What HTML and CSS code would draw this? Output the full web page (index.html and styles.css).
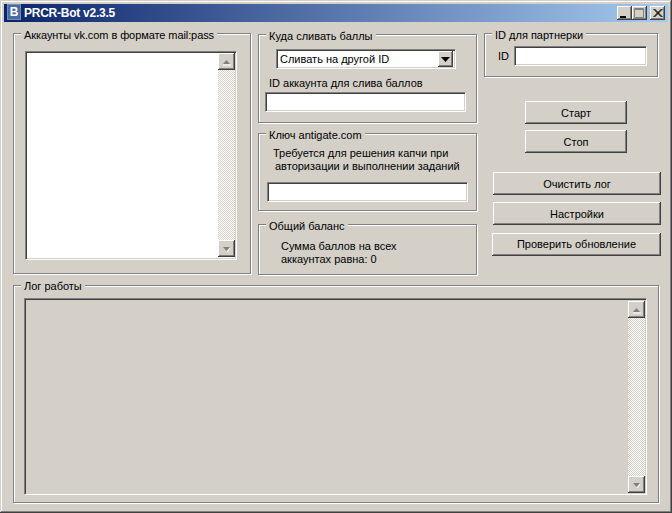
FILE: index.html
```html
<!DOCTYPE html>
<html lang="ru">
<head>
<meta charset="utf-8">
<title>PRCR-Bot v2.3.5</title>
<link rel="stylesheet" href="styles.css">
</head>
<body>
<div class="window">
  <div class="titlebar">
    <span class="app-icon">B</span>
    <span class="title">PRCR-Bot v2.3.5</span>
    <span class="caption-btn cap-min"><svg width="15" height="14" viewBox="0 0 15 14"><rect x="3" y="10" width="6" height="2" fill="#000"/></svg></span>
    <span class="caption-btn cap-max"><svg width="15" height="14" viewBox="0 0 15 14"><path d="M2.500 2.500h9v9h-9zM2.500 3.500h9" fill="none" stroke="#808080"/></svg></span>
    <span class="caption-btn cap-close"><svg width="15" height="14" viewBox="0 0 15 14"><path d="M3.500 3l8 8M4.500 3l8 8M11.500 3l-8 8M12.500 3l-8 8" fill="none" stroke="#000"/></svg></span>
  </div>

  <div class="top">
    <section class="group g-accounts">
      <span class="legend legend-tight">Аккаунты vk.com в формате mail:pass</span>
      <div class="sunken list">
        <div class="scrollbar">
          <span class="sb-btn"><svg width="13" height="13" viewBox="0 0 13 13"><path d="M3 9h7L6.500 5z" fill="#808080"/><path d="M3 10h8" stroke="#fff"/></svg></span>
          <span class="sb-track"></span>
          <span class="sb-btn"><svg width="13" height="13" viewBox="0 0 13 13"><path d="M3 5h7L6.500 9z" fill="#808080"/><path d="M7 10l3-4" stroke="#fff"/></svg></span>
        </div>
      </div>
    </section>

    <div class="col-mid">
      <section class="group g-target">
        <span class="legend">Куда сливать баллы</span>
        <div class="sunken combo">
          <span class="combo-text">Сливать на другой ID</span>
          <span class="combo-btn"><svg width="9" height="5" viewBox="0 0 9 5"><path d="M0 0h9L4.500 5z" fill="#000"/></svg></span>
        </div>
        <p class="label l-target">ID аккаунта для слива баллов</p>
        <div class="sunken field f-target"></div>
      </section>

      <section class="group g-key">
        <span class="legend">Ключ antigate.com</span>
        <p class="label l-key1">Требуется для решения капчи при</p>
        <p class="label l-key2">авторизации и выполнении заданий</p>
        <div class="sunken field f-key"></div>
      </section>

      <section class="group g-balance">
        <span class="legend">Общий баланс</span>
        <p class="label l-sum1">Сумма баллов на всех</p>
        <p class="label l-sum2">аккаунтах равна: 0</p>
      </section>
    </div>

    <div class="col-right">
      <section class="group g-partner">
        <span class="legend">ID для партнерки</span>
        <div class="partner-row">
          <span class="label">ID</span>
          <div class="sunken field f-partner"></div>
        </div>
      </section>
      <div class="btn b-start">Старт</div>
      <div class="btn b-stop">Стоп</div>
      <div class="btn b-clear">Очистить лог</div>
      <div class="btn b-settings">Настройки</div>
      <div class="btn b-update">Проверить обновление</div>
    </div>
  </div>

  <section class="group g-log">
    <span class="legend legend-log">Лог работы</span>
    <div class="sunken log">
      <div class="scrollbar">
        <span class="sb-btn"><svg width="13" height="13" viewBox="0 0 13 13"><path d="M3 9h7L6.500 5z" fill="#808080"/><path d="M3 10h8" stroke="#fff"/></svg></span>
        <span class="sb-track"></span>
        <span class="sb-btn"><svg width="13" height="13" viewBox="0 0 13 13"><path d="M3 5h7L6.500 9z" fill="#808080"/><path d="M7 10l3-4" stroke="#fff"/></svg></span>
      </div>
    </div>
  </section>
</div>
</body>
</html>
```
FILE: styles.css
```css
* { box-sizing: border-box; }
html, body { margin: 0; padding: 0; }
body { background: #d4d0c8; font: 11px/13px "Liberation Sans", Arial, sans-serif; color: #000; }

.window {
  width: 672px;
  height: 513px;
  padding: 4px;
  background: #d4d0c8;
  overflow: hidden;
  box-shadow: inset -1px -1px #404040, inset 1px 1px #d4d0c8, inset -2px -2px #808080, inset 2px 2px #fff;
}

.titlebar {
  height: 18px;
  display: flex;
  align-items: center;
  padding-left: 3px;
  padding-right: 3px;
  background: linear-gradient(90deg, #0a246a, #a6caf0);
}
.app-icon {
  width: 14px;
  height: 16px;
  margin-top: -2px;
  background: #4a6c9e;
  box-shadow: inset 0 0 0 1px #6f8db8;
  color: #fff;
  font-weight: bold;
  font-size: 12px;
  line-height: 16px;
  text-align: center;
}
.title { margin-left: 3px; flex: 1; color: #fff; font-weight: bold; font-size: 12px; letter-spacing: -0.25px; }
.caption-btn {
  width: 15px;
  height: 14px;
  display: block;
  background: #d4d0c8;
  box-shadow: inset -1px -1px #404040, inset 1px 1px #fff, inset -2px -2px #808080;
}
.caption-btn svg { display: block; }
.cap-max { margin: 0 2px 0 0; }
.cap-close { margin-left: 1px; }

.top { display: flex; margin: 11px 0 0 9px; }
.col-mid { width: 219px; margin-left: 7px; display: flex; flex-direction: column; }
.col-right { width: 177px; margin-left: 7px; display: flex; flex-direction: column; }

.group {
  position: relative;
  border: 1px solid #808080;
  box-shadow: inset 1px 1px #fff, 1px 1px #fff;
}
.legend {
  position: absolute;
  left: 7px;
  top: -5px;
  padding: 0 3px;
  background: #d4d0c8;
  white-space: nowrap;
}
.legend-tight { letter-spacing: -0.08px; }
.legend-log { top: -6px; }
.label { margin: 0; white-space: nowrap; }

.sunken {
  border: 1px solid;
  border-color: #808080 #fff #fff #808080;
  box-shadow: inset 1px 1px #404040, inset -1px -1px #d4d0c8;
  background: #fff;
}
.field { height: 20px; }

.g-accounts { width: 238px; height: 241px; padding: 17px 0 0 11px; }
.list { width: 212px; height: 209px; padding: 1px 1px 2px 2px; display: flex; justify-content: flex-end; }
.scrollbar { width: 17px; display: flex; flex-direction: column; }
.sb-btn {
  height: 17px;
  flex: none;
  padding: 2px;
  background: #d4d0c8;
  box-shadow: inset -1px -1px #404040, inset 1px 1px #fff, inset -2px -2px #808080;
}
.sb-btn svg { display: block; }
.sb-track {
  flex: 1;
  background-color: #d4d0c8;
  background-image: conic-gradient(#fff 25%, transparent 0 50%, #fff 0 75%, transparent 0);
  background-size: 2px 2px;
}

.g-target { height: 89px; margin-top: 1px; padding: 14px 0 0 6px; }
.combo { width: 180px; height: 20px; margin-left: 11px; padding: 2px; display: flex; align-items: center; }
.combo-text { flex: 1; padding: 1px 0 0 1px; }
.combo-btn {
  width: 15px;
  height: 16px;
  display: flex;
  align-items: center;
  justify-content: center;
  background: #d4d0c8;
  box-shadow: inset -1px -1px #404040, inset 1px 1px #fff, inset -2px -2px #808080;
}
.l-target { margin: 8px 0 2px 4px; }
.f-target { width: 201px; }

.g-key { height: 78px; margin-top: 10px; padding: 13px 0 0 8px; }
.l-key1 { margin-left: 6px; }
.l-key2 { margin-left: 8px; }
.f-key { width: 201px; margin-top: 9px; }

.g-balance { height: 51px; margin-top: 13px; padding: 15px 0 0 22px; }

.g-partner { width: 174px; height: 44px; padding-top: 12px; }
.partner-row { display: flex; align-items: center; padding-left: 13px; gap: 5px; }
.f-partner { width: 133px; }

.btn {
  height: 23px;
  padding-top: 1px;
  display: flex;
  align-items: center;
  justify-content: center;
  background: #d4d0c8;
  box-shadow: inset -1px -1px #404040, inset 1px 1px #fff, inset -2px -2px #808080;
}
.b-start { width: 102px; margin: 24px 0 0 41px; }
.b-stop { width: 102px; margin: 6px 0 0 41px; }
.b-clear { width: 168px; margin: 19px 0 0 9px; }
.b-settings { width: 168px; margin: 7px 0 0 9px; }
.b-update { width: 169px; margin: 8px 0 0 8px; padding-top: 0; }

.g-log { width: 646px; height: 218px; margin: 10px 0 0 9px; padding: 12px 0 0 10px; }
.log { width: 623px; height: 197px; padding: 2px 1px 1px 2px; background: #d4d0c8; display: flex; justify-content: flex-end; }
```
